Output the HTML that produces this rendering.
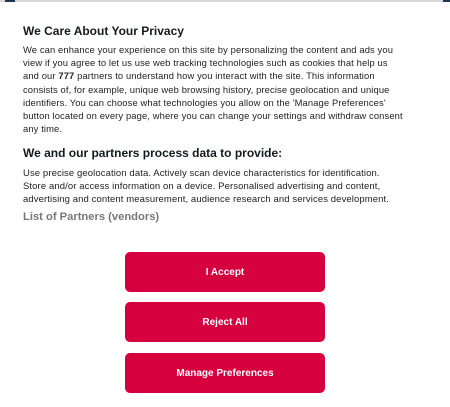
<!DOCTYPE html>
<html><head><meta charset="utf-8"><style>
html,body{margin:0;padding:0;width:450px;height:407px;background:#fff;overflow:hidden;font-family:"Liberation Sans",sans-serif;color:#1a1a1a;position:relative}
.top{position:absolute;left:0;top:0;width:450px;height:2px;background:#d8d8d8}
.tl{position:absolute;left:5px;top:0;width:10px;height:2px;background:#1f3550}
.tr{position:absolute;left:443px;top:0;width:7px;height:2px;background:#1f3550}
h1{position:absolute;left:23px;top:24px;margin:0;font-size:12px;font-weight:bold;color:#141a1f}
.p1{position:absolute;left:23px;top:43px;width:430px;font-size:9.4px;letter-spacing:0.12px;line-height:13.2px;color:#222;white-space:nowrap}
h2{position:absolute;left:23px;top:146px;margin:0;font-size:12px;font-weight:bold;color:#141a1f}
.p2{position:absolute;left:23px;top:167px;width:430px;font-size:9.5px;letter-spacing:0.1px;line-height:13px;color:#222;white-space:nowrap}
.lp{position:absolute;left:23px;top:211px;font-size:11.2px;font-weight:bold;color:#777}
.btn{position:absolute;left:125px;width:200px;height:40px;background:#d6003f;border-radius:5px;color:#fff;font-size:10px;font-weight:bold;text-align:center;line-height:42px}
</style></head><body>
<div class="top"></div><div class="tl"></div><div class="tr"></div>
<h1>We Care About Your Privacy</h1>
<div class="p1">We can enhance your experience on this site by personalizing the content and ads you<br>view if you agree to let us use web tracking technologies such as cookies that help us<br>and our <b>777</b> partners to understand how you interact with the site. This information<br>consists of, for example, unique web browsing history, precise geolocation and unique<br>identifiers. You can choose what technologies you allow on the 'Manage Preferences'<br>button located on every page, where you can change your settings and withdraw consent<br>any time.</div>
<h2>We and our partners process data to provide:</h2>
<div class="p2">Use precise geolocation data. Actively scan device characteristics for identification.<br>Store and/or access information on a device. Personalised advertising and content,<br>advertising and content measurement, audience research and services development.</div>
<div class="lp">List of Partners (vendors)</div>
<div class="btn" style="top:252px">I Accept</div>
<div class="btn" style="top:302px">Reject All</div>
<div class="btn" style="top:353px">Manage Preferences</div>
</body></html>
